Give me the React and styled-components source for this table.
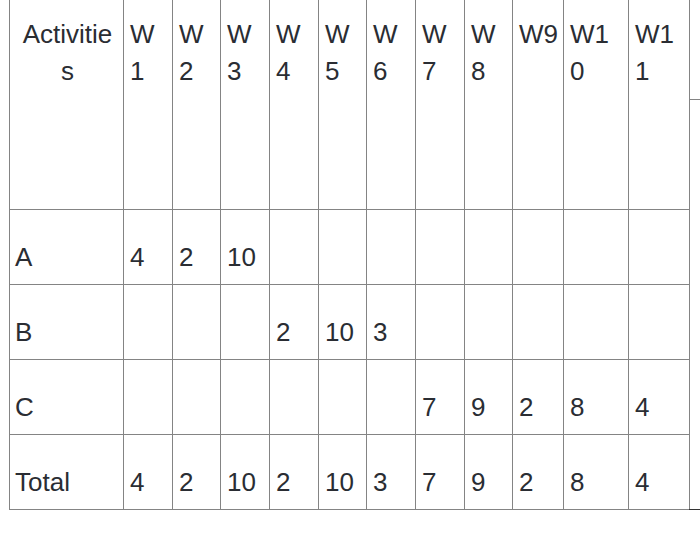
import styled, { createGlobalStyle } from "styled-components";

const GlobalStyle = createGlobalStyle`
  html, body {
    margin: 0;
    padding: 0;
    background: #fff;
    overflow: hidden;
  }
  body {
    font-family: "Liberation Sans", Arial, sans-serif;
    color: #2a2d33;
  }
`;

const widths = [114, 49, 48, 49, 49, 48, 49, 49, 48, 51, 65, 61, 100];

// header labels, split the way the narrow columns wrap them
const headers = [
  ["W", "1"],
  ["W", "2"],
  ["W", "3"],
  ["W", "4"],
  ["W", "5"],
  ["W", "6"],
  ["W", "7"],
  ["W", "8"],
  ["W9"],
  ["W1", "0"],
  ["W1", "1"],
];

const rows = [
  { name: "A", values: [4, 2, 10] },
  { name: "B", values: [null, null, null, 2, 10, 3] },
  { name: "C", values: [null, null, null, null, null, null, 7, 9, 2, 8, 4] },
  { name: "Total", values: [4, 2, 10, 2, 10, 3, 7, 9, 2, 8, 4] },
];

const Page = styled.div`
  padding-left: 9px;
`;

const Table = styled.table`
  border-collapse: collapse;
  table-layout: fixed;
  width: ${widths.reduce((a, b) => a + b, 0)}px;
  font-size: 26px;
  line-height: 37px;
`;

const Row = styled.tr`
  height: ${(p) => p.$h}px;
`;

const HeadCell = styled.th`
  font-weight: 400;
  text-align: ${(p) => (p.$center ? "center" : "left")};
  vertical-align: top;
  padding: 16px 4px 0 6px;
  border: 1px solid #848484;
  border-top: 0;
  span {
    display: block;
    white-space: nowrap;
  }
`;

const Cell = styled.td`
  vertical-align: bottom;
  padding: 0 4px 8px 6px;
  border: 1px solid #848484;
  white-space: nowrap;
  &:first-child {
    padding-left: 5px;
  }
`;

const SideTop = styled.td`
  border-left: 1px solid #848484;
  border-bottom: 1px solid #848484;
`;

const SideBody = styled.td`
  border-left: 1px solid #848484;
  border-bottom: 1px solid #333;
`;

const App = () => {
  return (
    <Page>
      <GlobalStyle />
      <Table>
        <colgroup>
          {widths.map((w, i) => (
            <col key={i} style={{ width: w }} />
          ))}
        </colgroup>
        <tbody>
          <Row $h={99}>
            <HeadCell rowSpan={2} $center>
              <span>Activitie</span>
              <span>s</span>
            </HeadCell>
            {headers.map((lines, i) => (
              <HeadCell key={i} rowSpan={2}>
                {lines.map((l) => (
                  <span key={l}>{l}</span>
                ))}
              </HeadCell>
            ))}
            <SideTop />
          </Row>
          <Row $h={110}>
            <SideBody rowSpan={5} />
          </Row>
          {rows.map((r) => (
            <Row key={r.name} $h={75}>
              <Cell>{r.name}</Cell>
              {headers.map((_, i) => (
                <Cell key={i}>{r.values[i] ?? ""}</Cell>
              ))}
            </Row>
          ))}
        </tbody>
      </Table>
    </Page>
  );
};

export default App;
